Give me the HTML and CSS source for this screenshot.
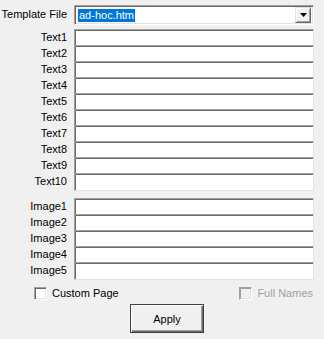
FILE: index.html
```html
<!DOCTYPE html>
<html>
<head>
<meta charset="utf-8">
<link rel="stylesheet" href="styles.css">
</head>
<body>
<div class="panel">
  <div class="grid top">
    <span class="lbl">Template File</span>
    <div class="combo">
      <span class="sel">ad-hoc.htm</span>
      <span class="drop"><svg width="7" height="4" viewBox="0 0 7 4"><path d="M0 0h7L3.5 4z" fill="#000"/></svg></span>
    </div>
  </div>
  <div class="grid group">
    <span class="lbl">Text1</span><div class="field"></div>
    <span class="lbl">Text2</span><div class="field"></div>
    <span class="lbl">Text3</span><div class="field"></div>
    <span class="lbl">Text4</span><div class="field"></div>
    <span class="lbl">Text5</span><div class="field"></div>
    <span class="lbl">Text6</span><div class="field"></div>
    <span class="lbl">Text7</span><div class="field"></div>
    <span class="lbl">Text8</span><div class="field"></div>
    <span class="lbl">Text9</span><div class="field"></div>
    <span class="lbl">Text10</span><div class="field last"></div>
  </div>
  <div class="grid group images">
    <span class="lbl">Image1</span><div class="field"></div>
    <span class="lbl">Image2</span><div class="field"></div>
    <span class="lbl">Image3</span><div class="field"></div>
    <span class="lbl">Image4</span><div class="field"></div>
    <span class="lbl">Image5</span><div class="field last"></div>
  </div>
  <div class="checks">
    <label class="chk"><span class="box"></span><span>Custom Page</span></label>
    <label class="chk disabled"><span class="box"></span><span>Full Names</span></label>
  </div>
  <div class="actions">
    <button class="btn">Apply</button>
  </div>
</div>
</body>
</html>
```
FILE: styles.css
```css
html, body {
  margin: 0;
  padding: 0;
  background: #f0f0f0;
}
body {
  font-family: "Liberation Sans", Arial, sans-serif;
  font-size: 11px;
  color: #000;
}
.panel {
  width: 324px;
  height: 339px;
  padding-top: 5px;
  box-sizing: border-box;
}
.grid {
  display: grid;
  grid-template-columns: 67px 240px;
  column-gap: 7px;
  align-items: stretch;
}
.lbl {
  text-align: right;
  white-space: nowrap;
  line-height: 16px;
}
.top {
  margin-bottom: 4px;
}
.top .lbl {
  line-height: 18px;
}
.combo {
  height: 20px;
  box-sizing: border-box;
  background: #fff;
  border-top: 1px solid #a0a0a0;
  border-left: 1px solid #a0a0a0;
  border-right: 1px solid #fff;
  border-bottom: 1px solid #fff;
  box-shadow: inset 1px 1px 0 #696969, inset -1px -1px 0 #e3e3e3;
  display: flex;
  align-items: center;
  padding: 2px 2px 2px 2px;
  position: relative;
}
.sel {
  background: #0078d7;
  color: #fff;
  height: 13px;
  line-height: 13px;
  padding: 0 1px;
  margin-left: 1px;
}
.drop {
  margin-left: auto;
  width: 16px;
  height: 16px;
  box-sizing: border-box;
  background: #f0f0f0;
  border-top: 1px solid #e3e3e3;
  border-left: 1px solid #e3e3e3;
  border-right: 1px solid #696969;
  border-bottom: 1px solid #696969;
  box-shadow: inset 1px 1px 0 #fff, inset -1px -1px 0 #a0a0a0;
  display: flex;
  align-items: center;
  justify-content: center;
}
.drop svg {
  display: block;
}
.field {
  height: 16px;
  box-sizing: border-box;
  background: #fff;
  border-top: 1px solid #a0a0a0;
  border-left: 1px solid #a0a0a0;
  border-right: 1px solid #e3e3e3;
  box-shadow: inset 0 1px 0 #696969, inset 1px 0 0 #696969;
}
.field.last {
  height: 18px;
  border-bottom: 1px solid #e3e3e3;
}
.images {
  margin-top: 7px;
}
.checks {
  margin-top: 7px;
  display: flex;
  padding-left: 34px;
  height: 13px;
}
.chk {
  display: flex;
  align-items: center;
  gap: 5px;
  line-height: 13px;
}
.chk.disabled {
  margin-left: auto;
  margin-right: 11px;
  color: #a0a0a0;
}
.box {
  width: 13px;
  height: 13px;
  box-sizing: border-box;
  background: #fff;
  border-top: 1px solid #a0a0a0;
  border-left: 1px solid #a0a0a0;
  border-right: 1px solid #fff;
  border-bottom: 1px solid #fff;
  box-shadow: inset 1px 1px 0 #696969, inset -1px -1px 0 #e3e3e3;
}
.disabled .box {
  background: #f0f0f0;
  box-shadow: inset 1px 1px 0 #a0a0a0, inset -1px -1px 0 #e3e3e3;
}
.actions {
  margin-top: 4px;
  padding-left: 130px;
}
.btn {
  width: 74px;
  height: 29px;
  box-sizing: border-box;
  font-family: "Liberation Sans", Arial, sans-serif;
  font-size: 11px;
  color: #000;
  background: #f0f0f0;
  border: 1px solid #404040;
  box-shadow: inset 1px 1px 0 #fff, inset -1px -1px 0 #696969, inset -2px -2px 0 #a0a0a0;
  padding: 0;
  margin: 0;
}
```
